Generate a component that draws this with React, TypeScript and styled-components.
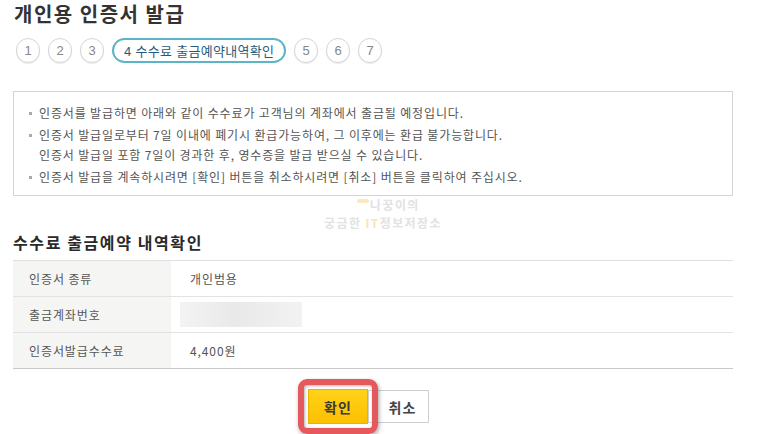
import React from 'react';
import styled, { createGlobalStyle } from 'styled-components';

const steps = ['1', '2', '3', '4 수수료 출금예약내역확인', '5', '6', '7'];
const activeStep = 3;

const notices: string[][] = [
  ['인증서를 발급하면 아래와 같이 수수료가 고객님의 계좌에서 출금될 예정입니다.'],
  [
    '인증서 발급일로부터 7일 이내에 폐기시 환급가능하여, 그 이후에는 환급 불가능합니다.',
    '인증서 발급일 포함 7일이 경과한 후, 영수증을 발급 받으실 수 있습니다.',
  ],
  ['인증서 발급을 계속하시려면 [확인] 버튼을 취소하시려면 [취소] 버튼을 클릭하여 주십시오.'],
];

interface Row {
  label: string;
  value: string | null;
}

const rows: Row[] = [
  { label: '인증서 종류', value: '개인범용' },
  { label: '출금계좌번호', value: null },
  { label: '인증서발급수수료', value: '4,400원' },
];

const App: React.FC = () => {
  return (
    <>
      <GlobalStyle />
      <Page>
        <Title>개인용 인증서 발급</Title>
        <Steps>
          {steps.map((s, i) => (
            <Step key={s} active={i === activeStep}>
              {s}
            </Step>
          ))}
        </Steps>

        <NoticeBox>
          {notices.map((lines, i) => (
            <NoticeItem key={i}>
              {lines.map((l) => (
                <div key={l}>{l}</div>
              ))}
            </NoticeItem>
          ))}
        </NoticeBox>

        <SectionHead>
          <SectionTitle>수수료 출금예약 내역확인</SectionTitle>
          <Watermark>
            <WmTop>
              <WmDash />
              나꿍이의
            </WmTop>
            <WmBottom>
              궁금한 <WmAccent>IT</WmAccent>정보저장소
            </WmBottom>
          </Watermark>
        </SectionHead>

        <Table>
          <tbody>
            {rows.map((r) => (
              <tr key={r.label}>
                <Th>{r.label}</Th>
                <Td>{r.value ?? <Redacted />}</Td>
              </tr>
            ))}
          </tbody>
        </Table>

        <Buttons>
          <Highlight>
            <ConfirmButton>확인</ConfirmButton>
          </Highlight>
          <CancelButton>취소</CancelButton>
        </Buttons>
      </Page>
    </>
  );
};

const GlobalStyle = createGlobalStyle`
  html, body {
    margin: 0;
    padding: 0;
    background: #fff;
  }
  body {
    font-family: "Noto Sans CJK KR", "Noto Sans", sans-serif;
    color: #555;
  }
`;

const Page = styled.div`
  width: 720px;
  padding: 0 0 0 13px;
`;

const Title = styled.h1`
  margin: 0;
  padding: 2px 0 0 1px;
  font-size: 20px;
  line-height: 24px;
  font-weight: bold;
  letter-spacing: 1.5px;
  color: #333;
`;

const Steps = styled.div`
  display: flex;
  gap: 8px;
  margin: 12px 0 0 3px;
`;

const Step = styled.div<{ active: boolean }>`
  box-sizing: border-box;
  height: 25px;
  min-width: 24px;
  padding: ${(p) => (p.active ? '0 10px' : '0')};
  border-radius: 13px;
  border: ${(p) => (p.active ? '2px solid #5cb4c7' : '1px solid #d6d6d6')};
  box-shadow: ${(p) => (p.active ? 'none' : '0 1px 1px rgba(0,0,0,0.08)')};
  display: flex;
  align-items: center;
  justify-content: center;
  font-family: "Liberation Sans", "Noto Sans CJK KR", sans-serif;
  font-size: 13px;
  letter-spacing: ${(p) => (p.active ? '0.3px' : '0')};
  color: ${(p) => (p.active ? '#1f5d7a' : '#888')};
  background: #fff;
`;

const NoticeBox = styled.div`
  box-sizing: border-box;
  margin-top: 28px;
  width: 720px;
  border: 1px solid #d4d4d4;
  padding: 11px 14px 8px 15px;
  display: flex;
  flex-direction: column;
  gap: 2px;
`;

const NoticeItem = styled.div`
  position: relative;
  padding-left: 10px;
  font-size: 12px;
  line-height: 20px;
  letter-spacing: 0.85px;
  color: #555;

  &::before {
    content: '';
    position: absolute;
    left: 0;
    top: 9px;
    width: 3px;
    height: 3px;
    background: #aaa;
  }
`;

const SectionHead = styled.div`
  position: relative;
  height: 64px;
  display: flex;
  align-items: flex-end;
`;

const SectionTitle = styled.h2`
  margin: 0 0 8px 0;
  font-size: 16px;
  line-height: 20px;
  font-weight: bold;
  letter-spacing: 1.6px;
  color: #2a2a2a;
`;

const Watermark = styled.div`
  position: absolute;
  left: 311px;
  top: 1px;
  width: 124px;
  font-size: 12px;
  font-weight: bold;
  color: #e2e2e2;
  letter-spacing: 1.4px;
`;

const WmTop = styled.div`
  display: flex;
  align-items: flex-start;
  padding-left: 33px;
  gap: 1px;
  height: 15px;
  line-height: 15px;
`;

const WmBottom = styled.div`
  margin-top: 2px;
  height: 17px;
  line-height: 17px;
  white-space: nowrap;
`;

const WmDash = styled.span`
  display: inline-block;
  width: 12px;
  height: 4px;
  margin-top: 2px;
  border-radius: 2px;
  background: #fde7bd;
`;

const WmAccent = styled.span`
  color: #fde3b0;
`;

const Table = styled.table`
  width: 720px;
  border-collapse: collapse;
  border-top: 1px solid #dfdfdf;
  border-bottom: 1px solid #c8c8c8;
  font-size: 12px;
  letter-spacing: 0.9px;

  tr + tr th,
  tr + tr td {
    border-top: 1px solid #e2e2e2;
  }
`;

const Th = styled.th`
  box-sizing: border-box;
  width: 158px;
  height: 35px;
  padding: 0 0 0 16px;
  background: #f5f5f4;
  text-align: left;
  font-weight: normal;
  color: #555;
`;

const Td = styled.td`
  height: 35px;
  padding: 0 0 0 19px;
  color: #555;
`;

const Redacted = styled.div`
  width: 122px;
  height: 25px;
  margin-left: -10px;
  background: linear-gradient(90deg, #f3f3f3 0%, #e9e9e9 45%, #f2f2f2 100%);
  filter: blur(0.6px);
`;

const Buttons = styled.div`
  display: flex;
  align-items: center;
  justify-content: center;
  margin-top: 10px;
  padding-right: 19px;
`;

const Highlight = styled.div`
  position: relative;
  z-index: 1;
  padding: 4px;
  border: 6px solid #e5585b;
  border-radius: 9px;
  box-shadow: 1px 2px 4px rgba(0, 0, 0, 0.35), inset 1px 1px 3px rgba(0, 0, 0, 0.3);
  margin-right: -10px;
`;

const ConfirmButton = styled.button`
  display: block;
  width: 60px;
  height: 35px;
  border: 1px solid #eab300;
  background: linear-gradient(180deg, #ffd21a 0%, #fcc000 100%);
  font-family: "Noto Sans CJK KR", sans-serif;
  font-size: 14px;
  font-weight: bold;
  letter-spacing: 1px;
  color: #3a3a3a;
  padding: 0;
`;

const CancelButton = styled.button`
  width: 61px;
  height: 33px;
  padding: 0 0 0 8px;
  border: 1px solid #cfcfcf;
  background: #fff;
  font-family: "Noto Sans CJK KR", sans-serif;
  font-size: 14px;
  font-weight: bold;
  letter-spacing: 1px;
  color: #444;
`;

export default App;
